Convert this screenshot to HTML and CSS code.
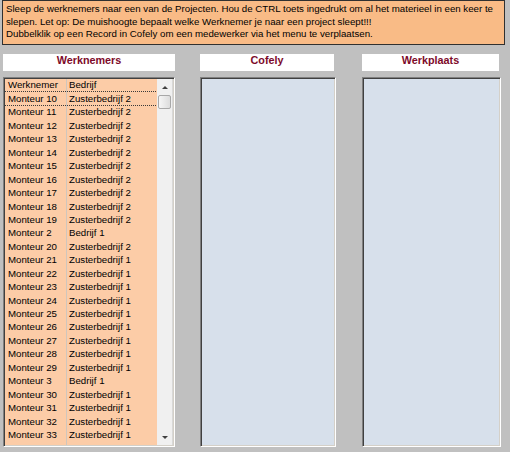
FILE: index.html
```html
<!DOCTYPE html>
<html>
<head>
<meta charset="utf-8">
<link rel="stylesheet" href="styles.css">
</head>
<body>
<div class="banner">Sleep de werknemers naar een van de Projecten. Hou de CTRL toets ingedrukt om al het materieel in een keer te<br>slepen. Let op: De muishoogte bepaalt welke Werknemer je naar een project sleept!!!<br>Dubbelklik op een Record in Cofely om een medewerker via het menu te verplaatsen.</div>
<div class="columns">
  <div class="col col-list">
    <div class="head">Werknemers</div>
    <div class="panel list">
      <div class="table">
        <div class="row hdr"><span class="c1">Werknemer</span><span class="c2">Bedrijf</span></div>
        <div class="row sel"><span class="c1">Monteur 10</span><span class="c2">Zusterbedrijf 2</span></div>
        <div class="row"><span class="c1">Monteur 11</span><span class="c2">Zusterbedrijf 2</span></div>
        <div class="row"><span class="c1">Monteur 12</span><span class="c2">Zusterbedrijf 2</span></div>
        <div class="row"><span class="c1">Monteur 13</span><span class="c2">Zusterbedrijf 2</span></div>
        <div class="row"><span class="c1">Monteur 14</span><span class="c2">Zusterbedrijf 2</span></div>
        <div class="row"><span class="c1">Monteur 15</span><span class="c2">Zusterbedrijf 2</span></div>
        <div class="row"><span class="c1">Monteur 16</span><span class="c2">Zusterbedrijf 2</span></div>
        <div class="row"><span class="c1">Monteur 17</span><span class="c2">Zusterbedrijf 2</span></div>
        <div class="row"><span class="c1">Monteur 18</span><span class="c2">Zusterbedrijf 2</span></div>
        <div class="row"><span class="c1">Monteur 19</span><span class="c2">Zusterbedrijf 2</span></div>
        <div class="row"><span class="c1">Monteur 2</span><span class="c2">Bedrijf 1</span></div>
        <div class="row"><span class="c1">Monteur 20</span><span class="c2">Zusterbedrijf 2</span></div>
        <div class="row"><span class="c1">Monteur 21</span><span class="c2">Zusterbedrijf 1</span></div>
        <div class="row"><span class="c1">Monteur 22</span><span class="c2">Zusterbedrijf 1</span></div>
        <div class="row"><span class="c1">Monteur 23</span><span class="c2">Zusterbedrijf 1</span></div>
        <div class="row"><span class="c1">Monteur 24</span><span class="c2">Zusterbedrijf 1</span></div>
        <div class="row"><span class="c1">Monteur 25</span><span class="c2">Zusterbedrijf 1</span></div>
        <div class="row"><span class="c1">Monteur 26</span><span class="c2">Zusterbedrijf 1</span></div>
        <div class="row"><span class="c1">Monteur 27</span><span class="c2">Zusterbedrijf 1</span></div>
        <div class="row"><span class="c1">Monteur 28</span><span class="c2">Zusterbedrijf 1</span></div>
        <div class="row"><span class="c1">Monteur 29</span><span class="c2">Zusterbedrijf 1</span></div>
        <div class="row"><span class="c1">Monteur 3</span><span class="c2">Bedrijf 1</span></div>
        <div class="row"><span class="c1">Monteur 30</span><span class="c2">Zusterbedrijf 1</span></div>
        <div class="row"><span class="c1">Monteur 31</span><span class="c2">Zusterbedrijf 1</span></div>
        <div class="row"><span class="c1">Monteur 32</span><span class="c2">Zusterbedrijf 1</span></div>
        <div class="row"><span class="c1">Monteur 33</span><span class="c2">Zusterbedrijf 1</span></div>
      </div>
      <div class="scrollbar">
        <div class="sbtn"><span class="arrow up"></span></div>
        <div class="thumb"></div>
        <div class="track"></div>
        <div class="sbtn"><span class="arrow down"></span></div>
      </div>
    </div>
  </div>
  <div class="col col-cofely">
    <div class="head narrow">Cofely</div>
    <div class="panel drop"></div>
  </div>
  <div class="col col-werkplaats">
    <div class="head narrow">Werkplaats</div>
    <div class="panel drop"></div>
  </div>
</div>
</body>
</html>
```

FILE: styles.css
```css
html, body {
  margin: 0;
  padding: 0;
}
body {
  background: #c0c0c0;
  font-family: "Liberation Sans", Arial, sans-serif;
  color: #000;
  width: 510px;
  height: 452px;
  overflow: hidden;
}
.banner {
  box-sizing: border-box;
  margin-left: 2px;
  width: 503px;
  height: 45px;
  background: #f9bb86;
  border: 1px solid #303030;
  padding: 2px 0 0 3px;
  font-size: 9.7px;
  line-height: 12.5px;
  white-space: nowrap;
}
.columns {
  display: flex;
  margin-top: 9px;
  padding-left: 3px;
}
.col {
  display: flex;
  flex-direction: column;
  gap: 6px;
}
.col-list { width: 172px; }
.col-cofely { width: 136px; margin-left: 25px; }
.col-werkplaats { width: 139px; margin-left: 26px; }
.head {
  box-sizing: border-box;
  height: 17px;
  background: #fff;
  color: #7d0a2a;
  font-weight: bold;
  font-size: 10.8px;
  line-height: 13px;
  text-align: center;
}
.head.narrow { width: calc(100% - 2px); }
.panel {
  box-sizing: border-box;
  height: 370px;
  border: 1px solid;
  border-color: #808080 #fff #fff #808080;
  box-shadow: inset 1px 1px 0 #404040, inset -1px -1px 0 #d4d0c8;
}
.drop {
  background: #d7e0eb;
}
.list {
  display: flex;
  padding: 1px;
  background: #f0f0f0;
  overflow: hidden;
}
.table {
  width: 152px;
  background: #fccca7;
  font-size: 9.7px;
  overflow: hidden;
  position: relative;
}
.row {
  display: flex;
  height: 13.45px;
  line-height: 13.45px;
  white-space: nowrap;
}
.row.hdr {
  height: 13px;
  line-height: 12px;
}
.row.sel {
  outline: 1px dotted #3a3a3a;
}
.c1 {
  box-sizing: border-box;
  width: 62px;
  padding-left: 3px;
}
.c2 {
  padding-left: 2px;
}
.table::after {
  content: "";
  position: absolute;
  left: 61px;
  top: 0;
  bottom: 0;
  width: 1px;
  background: #cfc6bd;
}
.scrollbar {
  width: 16px;
  display: flex;
  flex-direction: column;
  background: #f0f0f0;
  border-right: 1px solid #d8d8d8;
  box-sizing: border-box;
}
.sbtn {
  height: 16px;
  display: flex;
  align-items: center;
  justify-content: center;
  flex: none;
}
.arrow {
  width: 0;
  height: 0;
  border-left: 3px solid transparent;
  border-right: 3px solid transparent;
}
.arrow.up { border-bottom: 3px solid #404040; }
.arrow.down { border-top: 3px solid #404040; }
.thumb {
  flex: none;
  height: 14px;
  margin: 0 1px;
  box-sizing: border-box;
  border: 1px solid #a8a8a8;
  border-radius: 2px;
  background: linear-gradient(to right, #f6f6f6, #dcdcdc);
}
.track {
  flex: 1;
}
```
